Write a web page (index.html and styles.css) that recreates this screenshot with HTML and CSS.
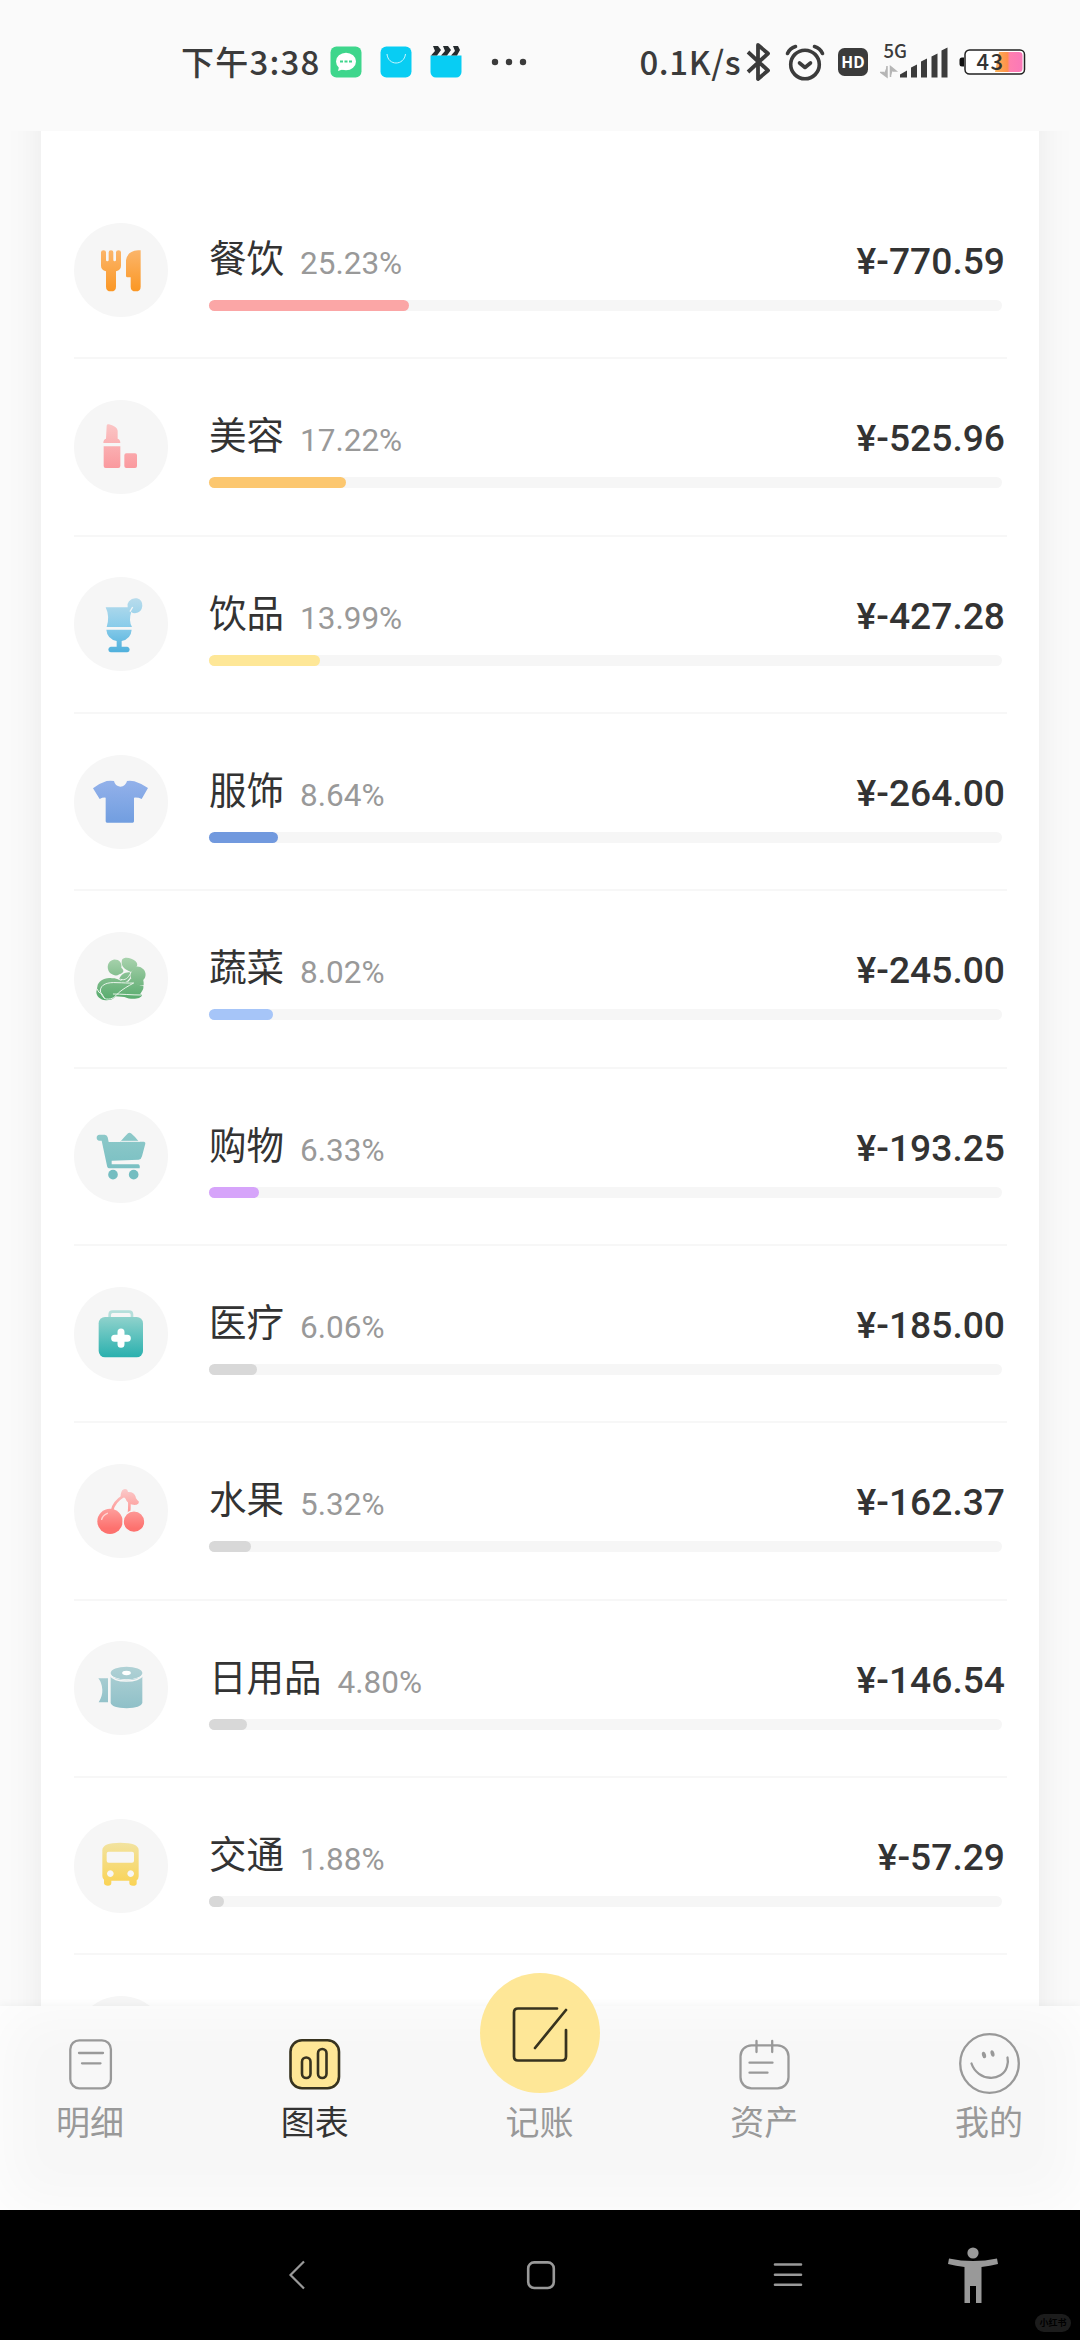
FILE: index.html
```html
<!DOCTYPE html>
<html lang="zh-CN">
<head>
<meta charset="utf-8">
<title>图表</title>
<link rel="stylesheet" href="styles.css">
</head>
<body>
<div class="screen">
  <header class="status">
    <span class="clock">下午3:38</span>
    <svg class="s-msg" viewBox="0 0 32 32" width="32" height="32"><rect x=".5" y=".5" width="31" height="31" rx="6" fill="#3ed68c"/><ellipse cx="16" cy="15.5" rx="10" ry="8.7" fill="#fff"/><path d="M9 21l-1 4 6-2z" fill="#fff"/><path d="M10 15.500h3M14.500 15.500h3M19 15.500h3" stroke="#3ed68c" stroke-width="2.200"/></svg>
    <svg class="s-bag" viewBox="0 0 32 32" width="32" height="32"><rect x=".5" y=".5" width="31" height="31" rx="6" fill="#08cdf3"/><path d="M7 8c1 12 17 12 18.500 0" fill="none" stroke="#c9f6ff" stroke-width="1"/></svg>
    <svg class="s-clap" viewBox="0 0 32 32" width="32" height="32"><path d="M.5 9.500h31V26a5.500 5.500 0 0 1-5.500 5.500H6A5.500 5.500 0 0 1 .5 26z" fill="#08cdf3"/><path d="M3 0h5l3 4-4 5.500H1L5 5zM13 0h5l3 4-4 5.500h-6L15 5zM23 0h5l2 4-3 5.500h-6L25 5z" fill="#252b2e"/></svg>
    <svg class="s-dots" viewBox="0 0 36 8" width="36" height="8" fill="#3b3b3b"><circle cx="4" cy="4" r="3.200"/><circle cx="18" cy="4" r="3.200"/><circle cx="32" cy="4" r="3.200"/></svg>
    <span class="speed">0.1K/s</span>
    <svg class="s-bt" viewBox="0 0 26 40" width="26" height="40"><path d="M2 10l20 18.500-10 8.500V3l10 8.500L2 30" fill="none" stroke="#3b3b3b" stroke-width="3.800" stroke-linejoin="round"/></svg>
    <svg class="s-alarm" viewBox="0 0 40 38" width="40" height="38" fill="none" stroke="#3b3b3b" stroke-width="3.600" stroke-linecap="round" stroke-linejoin="round"><circle cx="20" cy="21.500" r="14.300"/><path d="M14.500 20l5.500 4.500 5.500-4.500"/><path d="M2.500 10.500C4 7 7 4.500 10.500 3.500M37.500 10.500C36 7 33 4.500 29.500 3.500"/></svg>
    <svg class="s-hd" viewBox="0 0 30 28" width="30" height="28"><rect width="30" height="28" rx="6.500" fill="#3b3b3b"/><text x="15" y="19.500" text-anchor="middle" class="hd-text">HD</text></svg>
    <svg class="s-sig" viewBox="0 -4 68 46" width="68" height="46"><text x="3.500" y="14.500" class="g-text">5G</text><path d="M7 23v11L1 29.500h3.500M10.500 34V23.500l5.500 4.500h-3.500" fill="#b5b5b5" stroke="#b5b5b5" stroke-width="1.500"/><path d="M20 34.500v-3l7-4v7zM31 34.500V24.500l6-3v13zM41 34.500v-16l6-3v19zM51.500 34.500v-21l6-3v24zM61.500 34.500V7.500l6-3v30z" fill="#3b3b3b"/></svg>
    <svg class="s-bat" viewBox="0 -5 68 36" width="68" height="36"><defs><linearGradient id="bat"><stop offset="0" stop-color="#fbb45a"/><stop offset=".45" stop-color="#ff914a"/><stop offset=".55" stop-color="#ff7fb0"/><stop offset="1" stop-color="#fa78b8"/></linearGradient></defs><path d="M5 8.500H3a2.500 2.500 0 0 0-2.500 2.500v4A2.500 2.500 0 0 0 3 17.500h2z" fill="#111"/><rect x="6" y="1" width="59.500" height="24" rx="4.500" fill="#fff" stroke="#222" stroke-width="1.500"/><path d="M40 3h20a3.500 3.500 0 0 1 3.500 3.500v13A3.500 3.500 0 0 1 60 23H36z" fill="url(#bat)"/><text x="31.500" y="20.500" text-anchor="middle" class="bat-text">43</text></svg>
  </header>

  <main class="page">
    <section class="card">
      <article class="row">
        <svg class="icon" viewBox="132 67 282 282"><defs><linearGradient id="g1" x2="0" y2="1"><stop stop-color="#fbb56a"/><stop offset="1" stop-color="#fb9724"/></linearGradient></defs><path fill="url(#g1)" d="M213 155q0-6 7.500-6t7.500 6v23q0 4 4 4t4-4v-23q0-6 7-6t7 6v23q0 4 4 4t4-4v-23q0-6 7.500-6t7.500 6v40q0 13-15 17v46q0 14-15 14t-15-14v-46q-15-4-15-17zM332 149v109q0 14-15 14t-15-14v-28h-10q-4 0-4-5v-46q4-28 36-30z"/></svg>
        <div class="body"><div class="head"><span class="name">餐饮</span><span class="pct">25.23%</span><span class="amount">¥-770.59</span></div><div class="bar"><div class="fill rose" style="width:25.23%"></div></div></div>
      </article>
      <article class="row">
        <svg class="icon" viewBox="132 599 282 282"><defs><linearGradient id="g2" gradientUnits="userSpaceOnUse" x1="0" x2="0" y1="672" y2="803"><stop stop-color="#fbc5c5"/><stop offset="1" stop-color="#fa999e"/></linearGradient></defs><path fill="url(#g2)" d="M230 676q0-5 7-4 25 7 26 19v24q8 2 8 13h-51q0-11 8-13zM221 738h50v59q0 6-6 6h-38q-6 0-6-6zM289 759h26q6 0 6 6v32q0 6-6 6h-26q-6 0-6-6v-32q0-6 6-6z"/></svg>
        <div class="body"><div class="head"><span class="name">美容</span><span class="pct">17.22%</span><span class="amount">¥-525.96</span></div><div class="bar"><div class="fill amber" style="width:17.22%"></div></div></div>
      </article>
      <article class="row">
        <svg class="icon" viewBox="42 51 282 282"><defs><linearGradient id="g3" gradientUnits="userSpaceOnUse" x1="0" x2="0" y1="114" y2="277"><stop stop-color="#b9dcec"/><stop offset=".5" stop-color="#8ccdea"/><stop offset="1" stop-color="#4fb0dc"/></linearGradient></defs><path fill="url(#g3)" d="M137 142h66q-2-12 4-18 10-12 24-9 17 5 16 23-2 20-22 22-8 0-11-5-9 27 2 46h-76q10-32-3-59zM139 209h76q-2 27-30 34v17h17q7 1 7 8.500t-7 8.500h-50q-7-1-7-8.500t7-8.500h18v-17q-29-7-31-34z"/><path d="M218 141l-8 14" stroke="#f6f6f6" stroke-width="4"/></svg>
        <div class="body"><div class="head"><span class="name">饮品</span><span class="pct">13.99%</span><span class="amount">¥-427.28</span></div><div class="bar"><div class="fill yellow" style="width:13.99%"></div></div></div>
      </article>
      <article class="row">
        <svg class="icon" viewBox="42 583 282 282"><defs><linearGradient id="g4" x2="0" y2="1"><stop stop-color="#93b1ea"/><stop offset="1" stop-color="#719ee0"/></linearGradient></defs><path fill="url(#g4)" d="M140 661q12-2 22 0 3 15 19 17 16-1 20-17 11-2 22 1 22 7 41 20l-19 33q-10-5-23-4v71q0 4-4 4h-77q-4 0-4-4v-71q-9-1-18 4l-20-32q18-15 41-22z"/></svg>
        <div class="body"><div class="head"><span class="name">服饰</span><span class="pct">8.64%</span><span class="amount">¥-264.00</span></div><div class="bar"><div class="fill blue" style="width:8.64%"></div></div></div>
      </article>
      <article class="row">
        <svg class="icon" viewBox="-48 -40 282 282"><defs><linearGradient id="g5" gradientUnits="userSpaceOnUse" x1="0" x2="0" y1="36" y2="166"><stop stop-color="#a9d3ae"/><stop offset=".5" stop-color="#7fbc8b"/><stop offset="1" stop-color="#55ab6c"/></linearGradient></defs><g fill="url(#g5)"><path d="M60 83C47 66 54 46 70 43c16-2 27 8 24 24 10 9 8 14-6 20-10 7-17 3-28-4z"/><path d="M96 43c8-10 29-5 40 4 11 11 4 18-1 24l-12 9C99 70 92 60 96 43z"/><path d="M131 70c5-11 21-7 31 3 8 11 5 25-3 31-16-2-29-17-28-34z"/><path d="M122 95c0-19 8-25 15-20 12 6 26 20 24 45-15 2-32-5-39-25z"/><path d="M88 101c4-14 22-23 33-19 3 13-4 23-17 29-7-4-11-6-16-10z"/><path d="M92 107l20 6 12-15c11 16 22 22 36 24 2 10-6 18-10 25-18 0-28-9-48-17z"/><path d="M68 138c33-20 58-9 88 11-3 13-33 15-53 6l-36-3z"/><path d="M22 124c2-17 23-29 44-25 15-2 20 7 33 9 12 3 31 0 33 6-16 11-32 17-47 30-10 11-15 22-38 21-16-2-29-13-28-26z"/></g><path d="M31 137c-1-21 24-27 50-25 19 0 34 2 50 1-18 10-31 17-46 30-10 11-17 20-36 18-8-2-14-9-18-24zM21 131q4 12 15 15l7 13M92 102c14 5 23-5 29-17M70 146c25 0 55 3 83 3" fill="none" stroke="#f0f7f1" stroke-width="2.800" stroke-linecap="round"/></svg>
        <div class="body"><div class="head"><span class="name">蔬菜</span><span class="pct">8.02%</span><span class="amount">¥-245.00</span></div><div class="bar"><div class="fill sky" style="width:8.02%"></div></div></div>
      </article>
      <article class="row">
        <svg class="icon" viewBox="42 88 282 282"><defs><linearGradient id="g6" gradientUnits="userSpaceOnUse" x1="0" x2="0" y1="159" y2="300"><stop stop-color="#8ec9c9"/><stop offset="1" stop-color="#74bdc1"/></linearGradient></defs><path fill="url(#g6)" d="M118 165h16q7 1 9 8l3 14h34q14-16 24-26 4-4 9 0 11 9 24 25h15q5 1 4 6l-10 38q-2 9-10 10l-81 3v11h79q7 1 5 12h-89q-8 0-9-8l-16-75h-7q-8-1-8-9t8-9z"/><path d="M181 185h58" stroke="#f6f6f6" stroke-width="3"/><g fill="#74bdc1"><circle cx="159" cy="285" r="14.500"/><circle cx="221" cy="285" r="14.500"/></g></svg>
        <div class="body"><div class="head"><span class="name">购物</span><span class="pct">6.33%</span><span class="amount">¥-193.25</span></div><div class="bar"><div class="fill violet" style="width:6.33%"></div></div></div>
      </article>
      <article class="row">
        <svg class="icon" viewBox="42 620 282 282"><defs><linearGradient id="g7" x2="0" y2="1"><stop stop-color="#8fd2cc"/><stop offset="1" stop-color="#29b0ae"/></linearGradient></defs><path d="M149 712v-9q0-9 9-9h49q9 0 9 9v9" fill="none" stroke="#b5dfdb" stroke-width="8"/><rect x="116" y="710" width="133" height="121" rx="19" fill="url(#g7)"/><path d="M183 755v37M164 773.500h38" stroke="#fff" stroke-width="21" stroke-linecap="round"/></svg>
        <div class="body"><div class="head"><span class="name">医疗</span><span class="pct">6.06%</span><span class="amount">¥-185.00</span></div><div class="bar"><div class="fill" style="width:6.06%"></div></div></div>
      </article>
      <article class="row">
        <svg class="icon" viewBox="-48 -48 282 282"><defs><linearGradient id="g8" gradientUnits="userSpaceOnUse" x1="0" x2="0" y1="27" y2="145"><stop stop-color="#fbcaca"/><stop offset=".45" stop-color="#fda3a1"/><stop offset="1" stop-color="#fd716e"/></linearGradient></defs><path d="M66 92q5-26 36-45M116 54q4 12 1 46" stroke="url(#g8)" stroke-width="8" fill="none"/><path fill="url(#g8)" d="M92 44c2-7 3-16 13-17 6 0 8 4 9 9 12-1 20 4 23 14 0 5 4 9 9 14 2 7-4 11-11 11-14-1-23-6-28-18-4-5-9-7-15-5z"/><circle cx="60" cy="124" r="38" fill="url(#g8)"/><circle cx="132" cy="125" r="32.500" fill="url(#g8)" stroke="#f6f6f6" stroke-width="4"/><path d="M35 118q3-12 17-18" stroke="#fed5d3" stroke-width="4.500" stroke-linecap="round" fill="none"/></svg>
        <div class="body"><div class="head"><span class="name">水果</span><span class="pct">5.32%</span><span class="amount">¥-162.37</span></div><div class="bar"><div class="fill" style="width:5.32%"></div></div></div>
      </article>
      <article class="row">
        <svg class="icon" viewBox="42 65 282 282"><defs><linearGradient id="g9" gradientUnits="userSpaceOnUse" x1="0" x2="0" y1="142" y2="267"><stop stop-color="#b0d1d5"/><stop offset="1" stop-color="#8fc0c8"/></linearGradient></defs><path fill="url(#g9)" d="M115 177h29v72h-28q12-20 11-38-1-20-12-34zM152 171q46 23 95 0v80q-4 15-47 16-45-2-48-16z"/><ellipse cx="199.500" cy="161" rx="47.500" ry="19" fill="url(#g9)"/><ellipse cx="199.500" cy="161" rx="13" ry="6.500" fill="#fff"/><path d="M151 168q10 17 48 17t49-17" fill="none" stroke="#f6f6f6" stroke-width="5"/></svg>
        <div class="body"><div class="head"><span class="name">日用品</span><span class="pct">4.80%</span><span class="amount">¥-146.54</span></div><div class="bar"><div class="fill" style="width:4.8%"></div></div></div>
      </article>
      <article class="row">
        <svg class="icon" viewBox="42 597 282 282"><defs><linearGradient id="g10" x2="0" y2="1"><stop stop-color="#f2e3a0"/><stop offset="1" stop-color="#fad355"/></linearGradient></defs><path fill="url(#g10)" fill-rule="evenodd" d="M127 690q1-22 54-22 54 0 55 22v79q0 8-6 12v10q-1 6-11 6-11 0-11-8v-7h-54v7q0 8-10 8-11 0-12-7v-11q-5-4-5-11zM146 695q-6 0-6 6v21q0 6 6 6h70q6 0 6-6v-21q0-6-6-6zM151 751a10 10 0 1 0 .1 0zM212 751a10 10 0 1 0 .1 0z"/></svg>
        <div class="body"><div class="head"><span class="name">交通</span><span class="pct">1.88%</span><span class="amount">¥-57.29</span></div><div class="bar"><div class="fill" style="width:1.88%"></div></div></div>
      </article>
      <article class="row"><div class="icon"></div></article>
    </section>
  </main>

  <nav class="tabs">
    <a class="tab"><svg viewBox="0 0 70 70" width="70" height="70" fill="none" stroke="#999" stroke-width="2.300" stroke-linecap="round"><rect x="15.300" y="12.300" width="40.600" height="48" rx="9"/><path d="M24 25h24M27 35.300h18.500"/></svg><span>明细</span></a>
    <a class="tab on"><svg viewBox="0 0 70 70" width="70" height="70" stroke="#37331f" stroke-width="2.600"><rect x="10.500" y="12.300" width="48.500" height="48" rx="11.500" fill="#fee797"/><g fill="none"><rect x="22" y="29.500" width="8.500" height="20.500" rx="4.200"/><rect x="38" y="21" width="8.500" height="29" rx="4.200"/></g></svg><span>图表</span></a>
    <a class="tab"><i class="fab"><svg viewBox="0 0 120 120" width="120" height="120" fill="none" stroke="#37331f" stroke-width="2.700" stroke-linecap="round" stroke-linejoin="round"><path d="M77 35.500H38q-4 0-4 4v44q0 4 4 4h44q4 0 4-4V57M86 37L55 75"/></svg></i><span>记账</span></a>
    <a class="tab"><svg viewBox="0 0 70 70" width="70" height="70" fill="none" stroke="#999" stroke-width="2.300" stroke-linecap="round"><rect x="11.500" y="17.300" width="48" height="43" rx="11"/><path d="M27.500 13v11M43.200 13v11M20.500 34.700h23M20.500 44.700h18"/></svg><span>资产</span></a>
    <a class="tab"><svg viewBox="0 0 70 70" width="70" height="70" fill="none" stroke="#999" stroke-width="2.300" stroke-linecap="round"><circle cx="35.500" cy="35.500" r="29.300"/><path d="M17.500 35.500c6 18 31 19 35.500 3q1.500-5 .5-9"/><g fill="#999" stroke="none"><ellipse cx="30" cy="27" rx="2" ry="3.300" transform="rotate(-15 30 27)"/><ellipse cx="38.500" cy="25.500" rx="1.900" ry="3.300" transform="rotate(-15 38.500 25.500)"/></g></svg><span>我的</span></a>
  </nav>

  <footer class="sys">
    <svg class="back" viewBox="0 0 60 60" width="60" height="60"><path d="M37 16.500L23.500 30 37 43.500" fill="none" stroke="#999" stroke-width="2.200"/></svg>
    <svg class="home" viewBox="0 0 60 60" width="60" height="60"><rect x="17.200" y="17.400" width="25.600" height="25.600" rx="6" fill="none" stroke="#999" stroke-width="2.600"/></svg>
    <svg class="menu" viewBox="0 0 60 60" width="60" height="60"><path d="M17 19.500h26M17 29.700h26M17 39.700h26" stroke="#999" stroke-width="2.600" stroke-linecap="round"/></svg>
    <svg class="access" viewBox="0 0 60 60" width="60" height="60" fill="#999"><circle cx="30" cy="8" r="5.600"/><path d="M6 13.500q24 5 48 0l1 5.500q-8 2-16.500 3v36H33V41h-6v17h-5.500V22Q13 21 5 19z"/></svg>
    <span class="mark">小红书</span>
  </footer>
</div>
</body>
</html>
```
FILE: styles.css
```css
* { box-sizing: border-box; }
body { margin: 0; font-family: Roboto, "Noto Sans CJK SC", sans-serif; background: #fafafa; }
svg { display: block; flex: none; }
.screen { position: relative; width: 1080px; height: 2340px; display: flex; flex-direction: column; overflow: hidden; }

/* phone status bar */
.status { flex: none; height: 131px; padding: 0 53px 7px 181px; display: flex; align-items: center; color: #3b3b3b; font-family: "Noto Sans CJK SC", sans-serif; font-weight: 500; font-size: 33px; white-space: nowrap; }
.clock { width: 150px; margin-top: -2px; letter-spacing: 1.200px; }
.s-bag { margin-left: 18px; }
.s-clap { margin-left: 18px; }
.s-dots { margin-left: 29px; }
.speed { width: 107px; margin: -2px 0 0 112px; letter-spacing: .6px; }
.s-alarm { margin-left: 13px; }
.s-hd { margin-left: 13px; }
.s-sig { margin-left: 12px; }
.s-bat { margin-left: 11px; }
.hd-text { font: 700 15.500px "Open Sans", sans-serif; fill: #fff; }
.g-text { font: 500 18.500px "Noto Sans CJK SC", sans-serif; fill: #3b3b3b; }
.bat-text { font: 500 22px "Noto Sans CJK SC", sans-serif; letter-spacing: 1.500px; fill: #333; }

/* category ranking */
.page { flex: none; height: 1875px; padding: 0 41px; overflow: hidden; }
.card { height: 2100px; margin-top: -40px; padding: 91px 32px 0 33px; background: #fff; box-shadow: 0 0 36px rgba(0, 0, 0, .07); }
.row { height: 177.330px; display: flex; align-items: center; gap: 41px; border-bottom: 2px solid #f7f7f7; }
.icon { flex: none; width: 94px; height: 94px; border-radius: 50%; background: #f6f6f6; }
.body { flex: 1; align-self: stretch; padding-top: 51px; }
.head { height: 67px; padding-right: 2px; display: flex; align-items: baseline; line-height: 50px; color: #333; }
.name { font-family: "Noto Sans CJK SC", sans-serif; font-size: 37.500px; transform: translateY(-2px); }
.pct { margin-left: 16px; font-size: 31.500px; color: #999; }
.amount { margin-left: auto; font-size: 37.200px; font-weight: 500; }
.bar { height: 11px; margin-right: 5px; border-radius: 6px; background: #f6f6f6; }
.fill { height: 11px; border-radius: 6px; background: #d8d8d8; }
.rose { background: #fba6a6; }
.amber { background: #fcc76f; }
.yellow { background: #fee797; }
.blue { background: #7199de; }
.sky { background: #a6c5f8; }
.violet { background: #d6a4fa; }

/* app tabs */
.tabs { position: relative; flex: none; height: 204px; padding: 22px 56px 0 55px; display: flex; justify-content: space-between; background: #f7f7f7; box-shadow: inset 0 0 60px #fff, 0 -2px 8px rgba(0, 0, 0, .04); }
.tab { width: 70px; display: flex; flex-direction: column; align-items: center; font: 34px/50px "Noto Sans CJK SC", sans-serif; color: #999; }
.tab span { margin-top: -2px; white-space: nowrap; }
.on { color: #333; }
.fab { width: 120px; height: 120px; margin: -55px -25px 5px; border-radius: 50%; background: #fee797; }

/* system navigation */
.sys { position: relative; flex: none; height: 130px; padding: 35px 0 0 267px; display: flex; background: #000; }
.home { margin-left: 184px; }
.menu { margin-left: 187px; }
.access { margin-left: 125px; }
.mark { position: absolute; right: 9px; bottom: 8px; width: 36px; height: 18px; border-radius: 9px; background: #1c1c1c; color: #000; font: 700 9px/18px "Noto Sans CJK SC", sans-serif; text-align: center; }
```
